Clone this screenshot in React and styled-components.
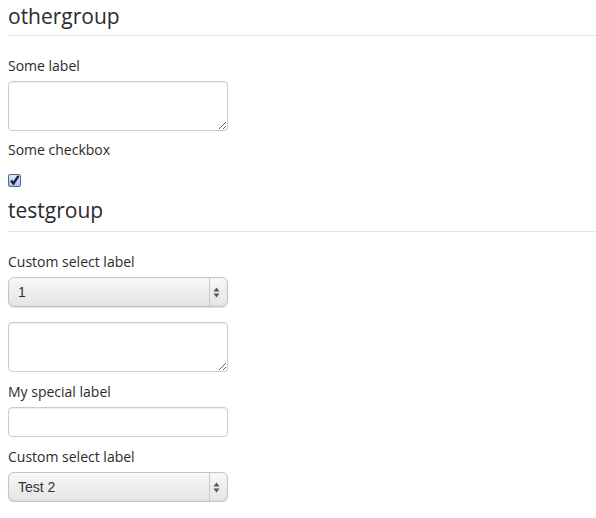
import React from 'react';
import styled, { createGlobalStyle } from 'styled-components';

const GlobalStyle = createGlobalStyle`
  body {
    margin: 0;
    background: #ffffff;
    font-family: "Open Sans", "Liberation Sans", sans-serif;
    color: #333333;
  }
`;

const Page = styled.div`
  padding-left: 8px;
  overflow: hidden;
`;

const Fieldset = styled.fieldset`
  border: 0;
  margin: 0;
  padding: 0;
  min-width: 0;
`;

const Legend = styled.div`
  font-size: 21px;
  line-height: 32px;
  padding-bottom: ${p => p.$pad}px;
  margin-top: ${p => p.$top}px;
  margin-bottom: 20px;
  border-bottom: 1px solid #e5e5e5;
  color: #2b2b2b;
`;

const Label = styled.label`
  display: block;
  font-size: 14px;
  line-height: 20px;
  margin-bottom: 5px;
  color: #2b2b2b;
`;

const TextArea = styled.textarea`
  display: block;
  box-sizing: border-box;
  width: 220px;
  height: 50px;
  margin: 0 0 ${p => p.$gap}px;
  padding: 4px 6px;
  border: 1px solid #cccccc;
  border-radius: 4px;
  box-shadow: inset 0 1px 1px rgba(0, 0, 0, 0.075);
  font-family: "Open Sans", sans-serif;
  font-size: 14px;
  color: #555555;
  background: #ffffff;
`;

const TextInput = styled.input`
  display: block;
  box-sizing: border-box;
  width: 220px;
  height: 30px;
  margin: 0 0 10px;
  padding: 4px 6px;
  border: 1px solid #cccccc;
  border-radius: 4px;
  box-shadow: inset 0 1px 1px rgba(0, 0, 0, 0.075);
  font-family: "Open Sans", sans-serif;
  font-size: 14px;
  color: #555555;
`;

const SelectBox = styled.div`
  position: relative;
  width: 220px;
  height: 30px;
  margin-bottom: ${p => p.$gap}px;
`;

const Select = styled.select`
  appearance: none;
  -webkit-appearance: none;
  box-sizing: border-box;
  width: 100%;
  height: 100%;
  margin: 0;
  padding: 0 24px 0 9px;
  border: 1px solid #c4c4c4;
  border-radius: 6px;
  background: linear-gradient(#f9f9f9 0%, #eeeeee 45%, #e6e6e6 100%);
  box-shadow: inset 0 -1px 2px rgba(0, 0, 0, 0.06), 0 1px 1px rgba(0, 0, 0, 0.12);
  font-family: "Liberation Sans", Arial, sans-serif;
  font-size: 14px;
  color: #333333;
  outline: none;
`;

const Arrows = styled.span`
  position: absolute;
  top: 1px;
  right: 1px;
  bottom: 1px;
  width: 18px;
  padding-left: 3px;
  box-sizing: border-box;
  border-left: 1px solid #c8c8c8;
  display: flex;
  align-items: center;
  pointer-events: none;
`;

const CheckBox = styled.span`
  display: flex;
  align-items: center;
  justify-content: center;
  box-sizing: border-box;
  width: 13px;
  height: 13px;
  margin-top: 14px;
  border: 1px solid #4d6a92;
  border-radius: 2px;
  background: linear-gradient(#d9e8fb, #a9c6ec);
`;

const ArrowIcon = () => (
  <svg width="7" height="11" viewBox="0 0 7 11">
    <path d="M3.5 0.5 L6.5 4.5 L0.5 4.5 Z" fill="#555" />
    <path d="M3.5 10.5 L6.5 6.5 L0.5 6.5 Z" fill="#555" />
  </svg>
);

const CustomSelect = ({ value, options, gap }) => (
  <SelectBox $gap={gap}>
    <Select defaultValue={value}>
      {options.map(o => <option key={o}>{o}</option>)}
    </Select>
    <Arrows><ArrowIcon /></Arrows>
  </SelectBox>
);

export default function App() {
  return (
    <Page>
      <GlobalStyle />
      <Fieldset>
        <Legend $pad={3} $top={0}>othergroup</Legend>
        <Label>Some label</Label>
        <TextArea $gap={9} />
        <Label>Some checkbox</Label>
        <CheckBox>
          <svg width="11" height="11" viewBox="0 0 11 11">
            <path d="M2 5.5 L4.5 8.5 L9.5 0.8" fill="none" stroke="#1c2333" strokeWidth="2.4" />
          </svg>
        </CheckBox>
      </Fieldset>
      <Fieldset>
        <Legend $pad={5} $top={7}>testgroup</Legend>
        <Label>Custom select label</Label>
        <CustomSelect value="1" options={['1', '2', '3']} gap={15} />
        <TextArea $gap={10} />
        <Label>My special label</Label>
        <TextInput type="text" />
        <Label>Custom select label</Label>
        <CustomSelect value="Test 2" options={['Test 1', 'Test 2', 'Test 3']} gap={0} />
      </Fieldset>
    </Page>
  );
}
